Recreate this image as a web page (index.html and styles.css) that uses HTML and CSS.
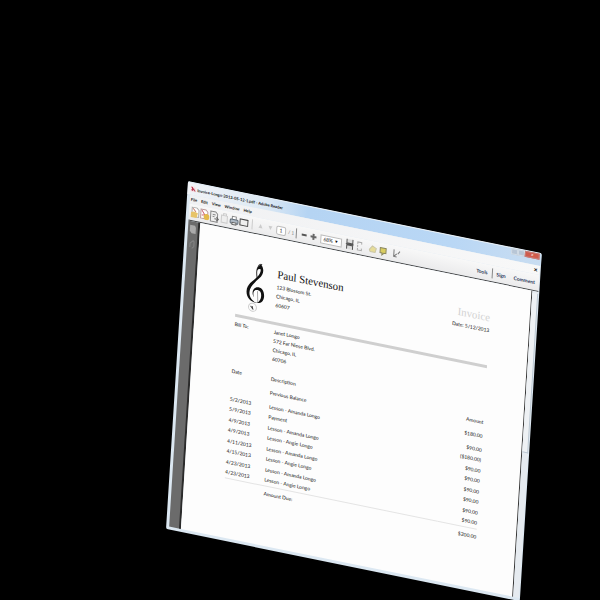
FILE: index.html
```
<!DOCTYPE html>
<html lang="en">
<head>
<meta charset="utf-8">
<title>Invoice - Adobe Reader</title>
<link rel="stylesheet" href="styles.css">
</head>
<body>
<main class="window">
  <header class="titlebar">
    <svg class="app" viewBox="0 0 6 6" aria-hidden="true"><path d="M0 0h4l2 2v4H0z" fill="#f6e4e6"/><path d="M1 1l4 4M2 1v4M1 4l3-1" stroke="#b63a52" fill="none"/></svg>
    <span>Invoice-Longo-2013-05-12-1.pdf - Adobe Reader</span>
    <div class="caption">
      <button class="cap" aria-label="Minimize"></button><button class="cap" aria-label="Maximize"></button><button class="cap close" aria-label="Close">×</button>
    </div>
  </header>
  <nav class="menubar">
    <button>File</button><button>Edit</button><button>View</button><button>Window</button><button>Help</button>
    <button class="doc-close" aria-label="Close document">×</button>
  </nav>
  <div class="toolbar">
    <button aria-label="Open"><svg viewBox="0 0 10 12"><path d="M2 1h5l2 2v7H2z" fill="#fff" stroke="#aaa"/><path d="M1 6l3-1 4 1-1 5H1z" fill="#e7c468"/><path d="M3 2l3 3" stroke="#c67b6c"/></svg></button>
    <button aria-label="Create PDF"><svg viewBox="0 0 10 12"><path d="M1 1h5l2 2v7H1z" fill="#fff" stroke="#b99"/><path d="M2 2l3 4-3 1" stroke="#c9596a" fill="none"/><circle cx="7" cy="8" r="3" fill="#e3b94c"/></svg></button>
    <button aria-label="Export"><svg viewBox="0 0 10 12"><path d="M1 1h5l2 2v8H1zM3 4h3M3 6h2" fill="#eee" stroke="#888"/><path d="M5 8h4M7 6l2 2-2 2" stroke="#666" fill="none"/></svg></button>
    <button aria-label="Save"><svg viewBox="0 0 10 12"><path d="M2 3h6v7H2zM4 3V1h3v2" fill="#eee" stroke="#ccc"/></svg></button>
    <button aria-label="Print"><svg viewBox="0 0 10 12"><path d="M3 5V2h4v3" fill="#fff" stroke="#888"/><rect x="1" y="5" width="8" height="4" rx="1" fill="#aeb9c4" stroke="#5e6a76"/><path d="M3 8h4v2H3z" fill="#fff" stroke="#666"/></svg></button>
    <button aria-label="Email"><svg viewBox="0 0 10 12"><rect x="1" y="3" width="8" height="6" fill="#eee" stroke="#444"/></svg></button>
    <i class="sep"></i>
    <button aria-label="Previous page"><svg viewBox="0 0 10 12"><path d="M5 4l2 4H3z" fill="#ccc"/></svg></button>
    <button aria-label="Next page"><svg viewBox="0 0 10 12"><path d="M5 8l2-4H3z" fill="#ccc"/></svg></button>
    <input class="page-no" aria-label="Page number" value="1">
    <span class="total">/ 1</span>
    <i class="sep dark"></i>
    <button aria-label="Zoom out"><svg viewBox="0 0 10 12"><path d="M3 6h5" stroke="#555" stroke-width="2"/></svg></button>
    <button aria-label="Zoom in"><svg viewBox="0 0 10 12"><path d="M2 6h6M5 3v6" stroke="#666" stroke-width="2"/></svg></button>
    <select class="zoom" aria-label="Zoom"><option>68% &nbsp;▾</option></select>
    <button class="gap" aria-label="Fit width"><svg viewBox="0 0 10 12"><path d="M2 1v4h6V1M2 11V7h6v4M1 6h8" fill="#ddd" stroke="#555"/></svg></button>
    <button aria-label="Fit page"><svg viewBox="0 0 10 12"><path d="M3 4V2h4v2M3 8v2h4V8M3 5v2" fill="none" stroke="#aaa"/></svg></button>
    <button class="step" aria-label="Highlight"><svg viewBox="0 0 10 12"><path d="M1 7l3-4 4 2-1 4H2z" fill="#e6dc98" stroke="#c9c5a6"/></svg></button>
    <button aria-label="Comment note"><svg viewBox="0 0 10 12"><path d="M2 3h6v5H6l-2 2V8H2z" fill="#d9cd60" stroke="#8c8860"/></svg></button>
    <button class="step" aria-label="Read mode"><svg viewBox="0 0 10 12"><path d="M2 2v7h3M6 6l2-3M2 9l3-3" fill="none" stroke="#777"/></svg></button>
    <div class="panels"><button>Tools</button><i class="sep dark"></i><button>Sign</button><button>Comment</button></div>
  </div>
  <div class="workspace">
    <aside class="rail">
      <button aria-label="Thumbnails"><svg viewBox="0 0 8 10"><path d="M1 1h5l1 2v6H3L1 7z" fill="#aaa"/></svg></button>
      <button aria-label="Attachments"><svg viewBox="0 0 8 10"><path d="M2 8V4l3-3 1 1v5L4 9" fill="none" stroke="#858585"/></svg></button>
    </aside>
    <article class="sheet">
      <header class="letterhead">
        <svg class="clef" viewBox="0 0 20 50" aria-hidden="true">
          <path d="M11 16C10 12 9 8 11 4c1-3 3-4 4-3" fill="none" stroke="#333"/>
          <path d="M14 1c4 4 3 10-1 14C8 21 4 25 4 31c0 4 3 8 8 9-7 0-11-4-11-10C1 23 7 19 10 15c3-3 4-6 4-9-1-1-3 0-4 2 0-3 2-6 4-7z" fill="#111"/>
          <path d="M9 35c-4-5-1-11 4-11 4 0 6 4 6 8 0 5-3 8-8 8 3-1 5-4 5-8 0-3-1-5-4-5-4 0-5 4-3 8z" fill="#111"/>
          <path d="M12 28l1 11" stroke="#aaa"/>
          <circle cx="8" cy="45" r="4" fill="#fff" stroke="#ccc"/><path d="M6 44l3 3M8 44v3" stroke="#444"/>
        </svg>
        <div class="from">
          <h1>Paul Stevenson</h1>
          <p>123 Blossom St.<br>Chicago, IL<br>60607</p>
        </div>
        <div class="meta">
          <h2>Invoice</h2>
          <p>Date: 5/12/2013</p>
        </div>
      </header>
      <section class="bill">
        <span>Bill To:</span>
        <p>Janet Longo<br>572 Far Niese Blvd.<br>Chicago, IL<br>60706</p>
      </section>
      <table>
        <thead><tr><th>Date</th><th>Description</th><th>Amount</th></tr></thead>
        <tbody>
          <tr class="previous"><td></td><td>Previous Balance</td><td>$180.00</td></tr>
          <tr><td>5/2/2013</td><td>Lesson - Amanda Longo</td><td>$90.00</td></tr>
          <tr><td>5/9/2013</td><td>Payment</td><td>($180.00)</td></tr>
          <tr><td>4/9/2013</td><td>Lesson - Amanda Longo</td><td>$90.00</td></tr>
          <tr><td>4/9/2013</td><td>Lesson - Angie Longo</td><td>$90.00</td></tr>
          <tr><td>4/11/2013</td><td>Lesson - Amanda Longo</td><td>$90.00</td></tr>
          <tr><td>4/15/2013</td><td>Lesson - Angie Longo</td><td>$90.00</td></tr>
          <tr><td>4/23/2013</td><td>Lesson - Amanda Longo</td><td>$90.00</td></tr>
          <tr><td>4/23/2013</td><td>Lesson - Angie Longo</td><td>$90.00</td></tr>
        </tbody>
        <tfoot><tr><td></td><td>Amount Due:</td><td>$200.00</td></tr></tfoot>
      </table>
    </article>
    <div class="scroll"><i class="thumb"></i></div>
  </div>
</main>
</body>
</html>
```
FILE: styles.css
```
* { box-sizing: border-box; margin: 0; padding: 0; }
html, body { height: 100%; background: #000; overflow: hidden; }
body {
  padding: 181px 51px 0 188px;
  font: 5px/9px Lato, "Open Sans", sans-serif;
  color: #111;
}
button, input, select { font: inherit; color: inherit; border: 0; background: none; appearance: none; }
svg { display: block; }

/* The whole window hangs tilted over the black backdrop. */
.window {
  padding: 0 1px 3px 3px;
  background: #dce8f2;
  border-radius: 2px;
  transform: matrix(0.98, 0.2, -0.063, 0.997, 0, 0);
  transform-origin: 0 0;
}

.titlebar {
  display: flex;
  align-items: center;
  gap: 1px;
  height: 13px;
  margin: 0 -1px 0 -3px;
  padding-left: 3px;
  background: linear-gradient(90deg, #f1f3f7 0%, #dde9f4 22%, #b5d4f3 34%, #b9d7f5 75%, #c9ddf1 100%);
  border-top: 1px solid #e4edf5;
  border-radius: 2px 2px 0 0;
  font-size: 4px;
  font-weight: 700;
  white-space: nowrap;
}
.app { width: 6px; height: 6px; }
.caption { display: flex; align-self: flex-start; margin-left: auto; padding-right: 2px; }
.cap { width: 7px; height: 6px; background: #b8c6d6; border: 1px solid #d2dce6; }
.close { width: 15px; background: #cf5b4c; border-color: #c77f7a; color: #fff; line-height: 4px; }

.menubar { display: flex; gap: 4px; height: 9px; padding-left: 1px; background: linear-gradient(90deg, #f0f1f3, #f8f8f8); font-size: 4px; font-weight: 700; }
.doc-close { margin-left: auto; padding-right: 2px; font-size: 7px; line-height: 7px; }

.toolbar {
  display: flex;
  align-items: center;
  height: 17px;
  padding: 0 4px 0 1px;
  background: linear-gradient(#f8f8f8, #ebebec);
  border-bottom: 1px solid #444;
  white-space: nowrap;
}
.toolbar svg { width: 10px; height: 12px; }
.sep { width: 1px; height: 10px; margin: 0 3px; background: #ccc; }
.dark { margin: 0 2px; background: #888; }
.page-no { width: 10px; height: 9px; margin-left: 1px; border: 1px solid #bbb; border-radius: 2px; background: #fff; text-align: center; }
.total { width: 8px; padding-left: 2px; color: #888; }
.zoom { width: 22px; height: 9px; margin-left: 2px; padding-left: 2px; border: 1px solid #bbb; background: #fff; line-height: 7px; }
.gap { margin-left: 3px; }
.step { margin-left: 4px; }
.panels { display: flex; align-items: center; margin-left: auto; gap: 2px; color: #2a3658; font-weight: 700; }
.panels button:last-child { margin-left: 6px; }

.workspace { display: flex; min-height: 307px; }
.rail { width: 12px; padding: 3px 1px; background: #6b6b6b; border-right: 2px solid #2b2b2b; }
.rail button { display: block; margin-bottom: 5px; }
.rail svg { width: 8px; height: 10px; }
.sheet { flex: 1; padding: 28px 40px 0 41px; background: #fdfdfd; border-right: 1px solid #333; }
.scroll { width: 6px; padding-top: 2px; background: #e6ebf0; }
.thumb { display: block; height: 160px; border-right: 1px solid #bac7d2; border-bottom: 1px solid #bac7d2; background: #eef1f4; }

.letterhead { display: grid; grid-template-columns: 40px 1fr auto; height: 58px; border-bottom: 3px solid #cfcfcf; }
.clef { width: 20px; height: 50px; margin-left: 9px; }
h1, h2 { font: 11px/14px "Liberation Serif", serif; margin-bottom: 2px; }
h2 { color: #d2d2d2; }
.meta { text-align: right; }
.bill { display: grid; grid-template-columns: 40px 1fr; padding-top: 3px; margin-bottom: 8px; }

table { width: 100%; height: 130px; border-collapse: collapse; table-layout: fixed; }
th { font-weight: 400; text-align: left; height: 14px; }
td { height: 10px; white-space: nowrap; }
th:first-child { width: 40px; }
th:last-child { width: 40px; }
th:last-child, td:last-child { text-align: right; }
.previous td { height: 15px; }
tfoot td { height: 16px; border-top: 1px solid #e4e4e4; }
```
